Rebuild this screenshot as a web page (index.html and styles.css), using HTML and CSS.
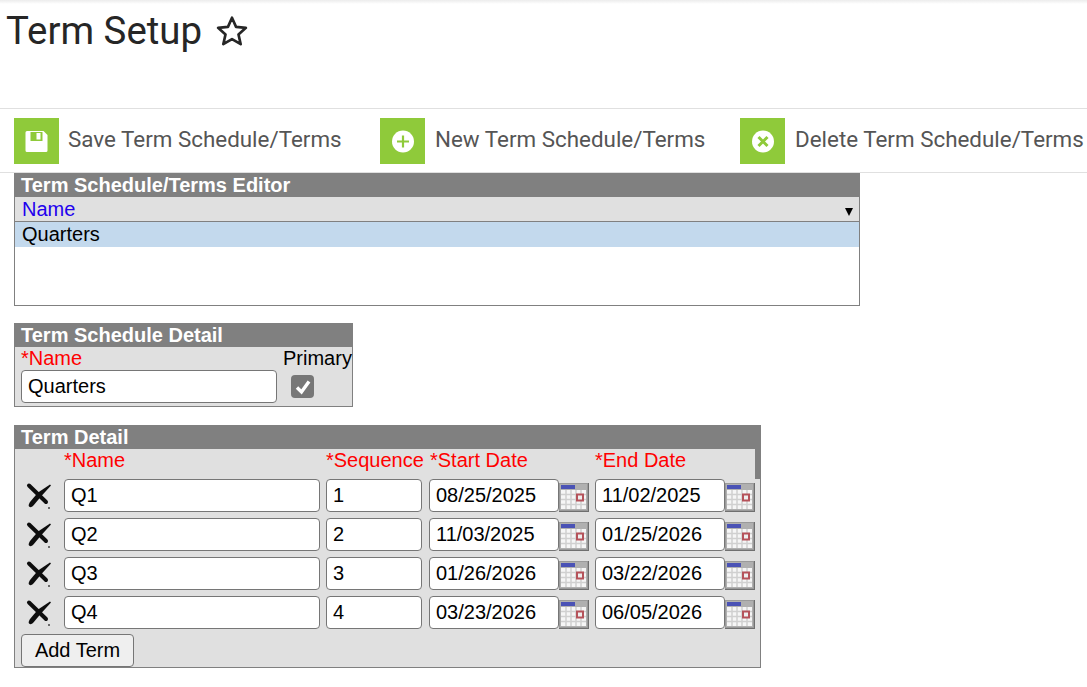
FILE: index.html
```html
<!DOCTYPE html>
<html lang="en">
<head>
<meta charset="utf-8">
<title>Term Setup</title>
<link rel="stylesheet" href="styles.css">
</head>
<body>
<svg class="defs" width="0" height="0" aria-hidden="true">
  <defs>
    <filter id="soft" x="-10%" y="-10%" width="120%" height="120%"><feGaussianBlur stdDeviation="0.350"/></filter>
    <symbol id="cal" viewBox="0 0 30 30">
      <rect x="0" y="0" width="30" height="29" fill="#6f6f6f"/>
      <rect x="0" y="0" width="29" height="28" fill="#9a9a9a"/>
      <rect x="1" y="1" width="27" height="26" fill="#b0b0b0"/>
      <rect x="2" y="7" width="25" height="19" fill="#f6f6f6"/>
      <path d="M7 7v19M12 7v19M17 7v19M22 7v19M2 11.500h25M2 16.500h25M2 21.500h25" stroke="#d0d0d0" stroke-width="1.500"/>
      <rect x="2" y="2" width="14" height="4" fill="#4a52b5"/>
      <rect x="18" y="11.500" width="6" height="6" fill="#eee" stroke="#b5525a" stroke-width="2"/>
    </symbol>
    <symbol id="del" viewBox="0 0 28 28">
      <g filter="url(#soft)" fill="#111">
        <path d="M5 2.500L22 19" fill="none" stroke="#111" stroke-width="4" stroke-linecap="round"/>
        <path d="M26 1.500L27 2.500 17 13.500 9 23Q7 25 5 23.500 4 22 6 19L14 9.500z"/>
      </g>
      <circle cx="25" cy="25" r="1" fill="#444"/>
    </symbol>
  </defs>
</svg>

<header class="page-head">
  <h1 class="page-title">Term Setup
    <svg class="star" viewBox="0 0 32 32" width="34" height="34" aria-hidden="true"><path d="M16 3.500l3.800 8.600 9.300.9-7 6.200 2.100 9.200-8.200-4.800-8.200 4.800 2.100-9.200-7-6.200 9.300-.9z" fill="none" stroke="#262626" stroke-width="2.500" stroke-linejoin="round"/></svg>
  </h1>
</header>

<nav class="toolbar">
  <div class="tool tool-save">
    <span class="tool-icon"><svg viewBox="0 0 24 24" width="24" height="24" aria-hidden="true"><path fill-rule="evenodd" d="M2 2H18.500L22.500 6V21.500a1.500 1.500 0 0 1-1.500 1.500H2A1.500 1.500 0 0 1 .5 21.500V3.500A1.500 1.500 0 0 1 2 2zM5.500 3V12H17.500V3zM11.500 4H15.500V10.500H11.500z" fill="#fff"/></svg></span>
    <span class="tool-label">Save Term Schedule/Terms</span>
  </div>
  <div class="tool tool-new">
    <span class="tool-icon"><svg viewBox="0 0 24 24" width="24" height="24" aria-hidden="true"><circle cx="12" cy="12.500" r="11" fill="#fff"/><path d="M12 6.500v12M6 12.500h12" stroke="#8fca3a" stroke-width="2.200"/></svg></span>
    <span class="tool-label">New Term Schedule/Terms</span>
  </div>
  <div class="tool tool-del">
    <span class="tool-icon"><svg viewBox="0 0 24 24" width="24" height="24" aria-hidden="true"><circle cx="12" cy="12.500" r="11" fill="#fff"/><path d="M7.500 8l9 9M16.500 8l-9 9" stroke="#8fca3a" stroke-width="3"/></svg></span>
    <span class="tool-label">Delete Term Schedule/Terms</span>
  </div>
</nav>

<section class="panel editor">
  <h2 class="panel-head">Term Schedule/Terms Editor</h2>
  <div class="editor-body">
    <div class="sort-bar"><span class="sort-name">Name</span><span class="sort-arrow"></span></div>
    <div class="list-row">Quarters</div>
  </div>
</section>

<section class="panel detail">
  <h2 class="panel-head">Term Schedule Detail</h2>
  <div class="detail-body">
    <div class="detail-name">
      <span class="req">*Name</span>
      <input class="field field-sched" type="text" value="Quarters">
    </div>
    <div class="detail-primary">
      <span>Primary</span>
      <span class="check"><svg viewBox="0 0 22 22" width="22" height="22" aria-hidden="true"><path d="M5 11.500l4.500 4.500 7.500-10.500" fill="none" stroke="#fff" stroke-width="3.400"/></svg></span>
    </div>
  </div>
</section>

<section class="panel terms">
  <h2 class="panel-head">Term Detail</h2>
  <div class="terms-body">
    <div class="terms-grid">
      <span></span>
      <span class="req">*Name</span>
      <span class="req col-seq">*Sequence</span>
      <span class="req col-start">*Start Date</span>
      <span></span>
      <span class="req col-end">*End Date</span>
      <span class="head-fill"></span>

      <svg class="del"><use href="#del"/></svg>
      <input class="field" type="text" value="Q1">
      <input class="field" type="text" value="1">
      <input class="field" type="text" value="08/25/2025">
      <svg class="cal"><use href="#cal"/></svg>
      <input class="field" type="text" value="11/02/2025">
      <svg class="cal"><use href="#cal"/></svg>

      <svg class="del"><use href="#del"/></svg>
      <input class="field" type="text" value="Q2">
      <input class="field" type="text" value="2">
      <input class="field" type="text" value="11/03/2025">
      <svg class="cal"><use href="#cal"/></svg>
      <input class="field" type="text" value="01/25/2026">
      <svg class="cal"><use href="#cal"/></svg>

      <svg class="del"><use href="#del"/></svg>
      <input class="field" type="text" value="Q3">
      <input class="field" type="text" value="3">
      <input class="field" type="text" value="01/26/2026">
      <svg class="cal"><use href="#cal"/></svg>
      <input class="field" type="text" value="03/22/2026">
      <svg class="cal"><use href="#cal"/></svg>

      <svg class="del"><use href="#del"/></svg>
      <input class="field" type="text" value="Q4">
      <input class="field" type="text" value="4">
      <input class="field" type="text" value="03/23/2026">
      <svg class="cal"><use href="#cal"/></svg>
      <input class="field" type="text" value="06/05/2026">
      <svg class="cal"><use href="#cal"/></svg>
    </div>
    <button class="add-btn" type="button">Add Term</button>
  </div>
</section>
</body>
</html>
```
FILE: styles.css
```css
* { box-sizing: border-box; }
html, body { margin: 0; padding: 0; }
body {
  width: 1087px;
  height: 687px;
  overflow: hidden;
  background: #fff;
  font-family: "Liberation Sans", Arial, sans-serif;
  font-size: 20px;
  color: #000;
}
.defs { position: absolute; }
.page-head {
  height: 108px;
  padding: 9px 0 0 6px;
  background: linear-gradient(#ececec 0, #fff 4px);
}
.page-title {
  margin: 0;
  display: flex;
  align-items: center;
  gap: 13px;
  font: 400 38.400px/44px Roboto, sans-serif;
  color: #262626;
}
.toolbar {
  height: 65px;
  display: flex;
  align-items: flex-start;
  padding: 9px 0 0 14px;
  border-top: 1px solid #e0e0e0;
  border-bottom: 1px solid #e0e0e0;
}
.tool { display: flex; align-items: flex-start; white-space: nowrap; }
.tool-save { width: 366px; }
.tool-new { width: 360px; }
.tool-icon {
  width: 45px;
  height: 46px;
  background: #8fca3a;
  display: flex;
  align-items: center;
  justify-content: center;
  margin-right: 9px;
}
.tool-new .tool-icon, .tool-del .tool-icon { margin-right: 10px; }
.tool-label {
  font: 400 22.400px/42px Roboto, sans-serif;
  color: #555;
}

.panel { margin-left: 14px; }
.panel-head {
  margin: 0;
  height: 24px;
  padding-left: 7px;
  background: #808080;
  color: #fff;
  font: 700 20px/24px "Liberation Sans", Arial, sans-serif;
}
.editor { width: 846px; }
.editor-body {
  height: 109px;
  border: 1px solid #808080;
  border-top: 0;
}
.sort-bar {
  height: 25px;
  padding: 0 6px 0 7px;
  display: flex;
  align-items: center;
  justify-content: space-between;
  background: #e0e0e0;
  border-bottom: 1px solid #808080;
  line-height: 24px;
}
.sort-name { color: #2200ee; }
.sort-arrow {
  margin-top: 6px;
  border-left: 4px solid transparent;
  border-right: 4px solid transparent;
  border-top: 8px solid #000;
}
.list-row {
  height: 25px;
  padding-left: 7px;
  background: #c3d9ed;
  line-height: 25px;
}

.detail { width: 339px; margin-top: 17px; }
.detail-body {
  height: 60px;
  display: flex;
  padding-left: 6px;
  background: #e0e0e0;
  border: 1px solid #808080;
  border-top: 0;
}
.detail-name { width: 262px; display: flex; flex-direction: column; line-height: 23px; }
.detail-primary { display: flex; flex-direction: column; line-height: 23px; }
.check {
  margin: 5px 0 0 8px;
  width: 23px;
  height: 23px;
  border-radius: 4px;
  background: #777;
  display: flex;
  align-items: center;
  justify-content: center;
}
.req { color: #f00; }
.field {
  display: block;
  width: 100%;
  height: 33px;
  margin: 0;
  padding: 0 6px;
  font: 20px "Liberation Sans", Arial, sans-serif;
  color: #000;
  background: #fff;
  border: 1px solid #767676;
  border-radius: 4px;
  outline: 0;
}
.field-sched { width: 256px; }

.terms { width: 747px; margin-top: 18px; }
.terms-body {
  height: 219px;
  padding-left: 6px;
  background: #e0e0e0;
  border: 1px solid #808080;
  border-top: 0;
}
.terms-grid {
  display: grid;
  grid-template-columns: 43px 256px 96px 130px 30px 130px 30px;
  grid-template-rows: 24px repeat(4, 33px);
  column-gap: 0;
  row-gap: 6px;
  align-items: start;
  line-height: 23px;
}
/* gaps between the name, sequence, start and end columns */
.terms-grid > :nth-child(7n+3) { margin-left: 6px; width: 96px; }
.terms-grid > :nth-child(7n+4) { margin-left: 13px; width: 130px; }
.terms-grid > :nth-child(7n+5) { margin-left: 13px; }
.terms-grid > :nth-child(7n+6) { margin-left: 19px; width: 130px; }
.terms-grid > :nth-child(7n+7) { margin-left: 19px; }
.terms-grid > .col-seq { margin-left: 6px; width: auto; white-space: nowrap; }
.terms-grid > .col-start { margin-left: 14px; width: auto; white-space: nowrap; }
.terms-grid > .col-end { margin-left: 19px; width: auto; white-space: nowrap; }
.terms-grid > .head-fill { margin-left: 19px; }
.head-fill {
  width: 36px;
  height: 30px;
  background: linear-gradient(90deg, transparent 30px, #808080 30px);
}
.cal { width: 30px; height: 30px; margin-top: 4px; display: block; }
.del { width: 28px; height: 28px; margin: 4px 0 0 3px; display: block; }
.add-btn {
  display: block;
  margin-top: 5px;
  width: 113px;
  height: 33px;
  padding: 0;
  font: 20px "Liberation Sans", Arial, sans-serif;
  color: #000;
  background: #efefef;
  border: 1px solid #767676;
  border-radius: 4px;
}
```
